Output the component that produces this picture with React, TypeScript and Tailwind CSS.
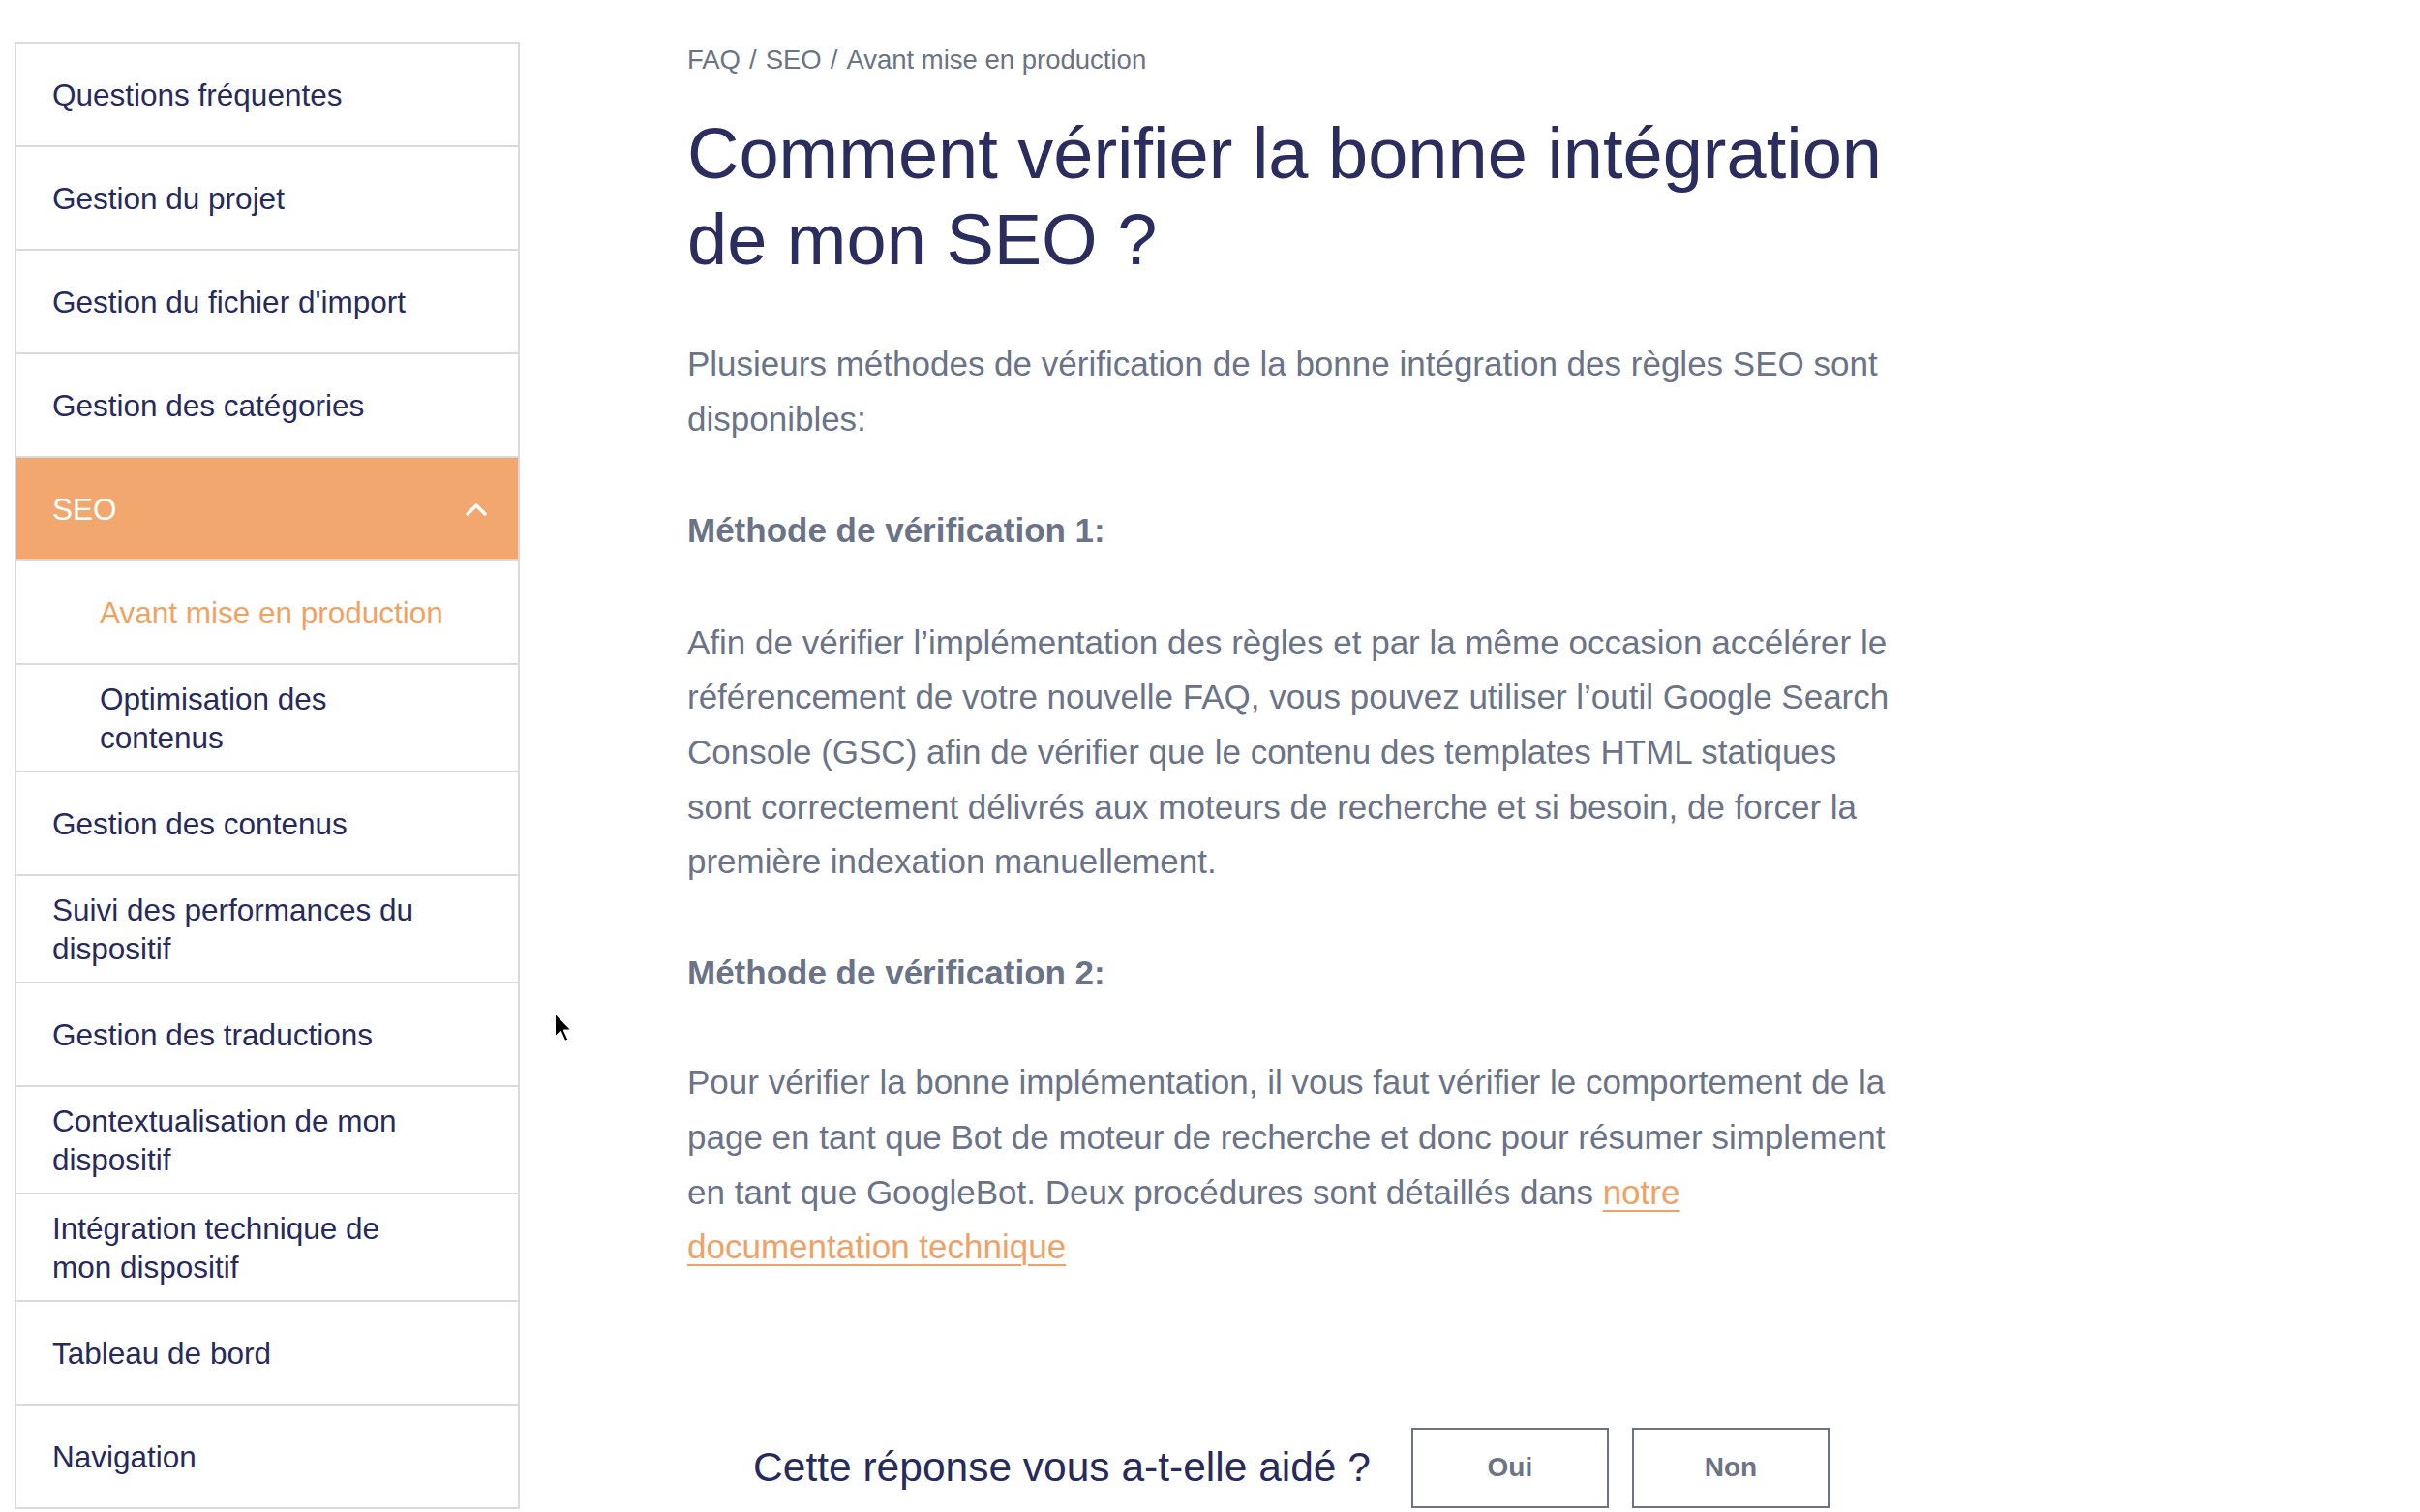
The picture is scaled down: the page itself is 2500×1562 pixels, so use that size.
import React from "react";

const navy = "text-[#272a5c]";

function Row({ children, sub, active }: { children: React.ReactNode; sub?: boolean; active?: boolean }) {
  return (
    <div
      className={`flex items-center min-h-[107px] py-[14.5px] border-b-2 border-[#dadada] text-[31.5px] leading-[40px] ${
        sub ? "pl-[86px] pr-[68px]" : "pl-[37px] pr-[96px]"
      } ${active ? "text-[#f0a263]" : navy}`}
    >
      <span>{children}</span>
    </div>
  );
}

export default function App() {
  return (
    <div
      className="relative w-[2500px] h-[1562px] overflow-hidden bg-white flex"
      style={{ fontFamily: '"Liberation Sans", Arial, Helvetica, sans-serif' }}
    >
      {/* Sidebar */}
      <aside className="ml-[15px] mt-[43px] w-[522px] shrink-0 self-start border-x-2 border-t-2 border-[#dadada]">
        <Row>Questions fréquentes</Row>
        <Row>Gestion du projet</Row>
        <Row>Gestion du fichier d'import</Row>
        <Row>Gestion des catégories</Row>
        <div className="flex items-center justify-between min-h-[107px] py-[14.5px] border-b-2 border-[#dadada] bg-[#f1a76d] pl-[37px] pr-[31px] text-[31.5px] leading-[40px] text-white">
          <span>SEO</span>
          <svg width="24" height="16" viewBox="0 0 24 16" fill="none">
            <path d="M3 13 L12 4 L21 13" stroke="white" strokeWidth="3.5" strokeLinecap="round" strokeLinejoin="round" />
          </svg>
        </div>
        <Row sub active>
          Avant mise en production
        </Row>
        <Row sub>Optimisation des contenus</Row>
        <Row>Gestion des contenus</Row>
        <Row>Suivi des performances du dispositif</Row>
        <Row>Gestion des traductions</Row>
        <Row>Contextualisation de mon dispositif</Row>
        <Row>Intégration technique de mon dispositif</Row>
        <Row>Tableau de bord</Row>
        <Row>Navigation</Row>
      </aside>

      {/* Main */}
      <main className="ml-[173px] pt-[45px] w-[1256px] shrink-0">
        <div className="text-[27.5px] leading-[34px] text-[#6b7385]">
          FAQ<span className="mx-[9px]">/</span>SEO<span className="mx-[9px]">/</span>Avant mise en production
        </div>
        <h1 className="mt-[35px] text-[74px] leading-[89px] text-[#2a2d5d] font-normal">
          Comment vérifier la bonne intégration de mon SEO ?
        </h1>
        <div className="text-[35px] leading-[56.6px] text-[#6a7388]">
          <p className="mt-[56px]">
            Plusieurs méthodes de vérification de la bonne intégration des règles SEO sont disponibles:
          </p>
          <p className="mt-[59px] font-bold">Méthode de vérification 1:</p>
          <p className="mt-[59px]">
            Afin de vérifier l’implémentation des règles et par la même occasion accélérer le référencement de votre
            nouvelle FAQ, vous pouvez utiliser l’outil Google Search Console (GSC) afin de vérifier que le contenu des
            templates HTML statiques sont correctement délivrés aux moteurs de recherche et si besoin, de forcer la
            première indexation manuellement.
          </p>
          <p className="mt-[58px] font-bold">Méthode de vérification 2:</p>
          <p className="mt-[57px]">
            Pour vérifier la bonne implémentation, il vous faut vérifier le comportement de la page en tant que Bot de
            moteur de recherche et donc pour résumer simplement en tant que GoogleBot. Deux procédures sont détaillés
            dans{" "}
            <a className="text-[#f0a264] underline decoration-2 underline-offset-[6px]" href="#">
              notre documentation technique
            </a>
          </p>
        </div>

        <div className="mt-[158px] flex items-center justify-center pr-[8px]">
          <span className="text-[42.5px] leading-[50px] text-[#272a5c]">Cette réponse vous a-t-elle aidé ?</span>
          <button className="ml-[42px] w-[204px] h-[83px] border-2 border-[#6b7385] text-[28px] font-bold text-[#6b7385]">
            Oui
          </button>
          <button className="ml-[24px] w-[204px] h-[83px] border-2 border-[#6b7385] text-[28px] font-bold text-[#6b7385]">
            Non
          </button>
        </div>
      </main>

      {/* Mouse cursor */}
      <svg className="absolute left-[570px] top-[1044px]" width="24" height="36" viewBox="0 0 24 36">
        <path
          d="M3 2 L3 28 L9 22 L13.5 32 L17.5 30.3 L13 20.5 L21 20.5 Z"
          fill="black"
          stroke="white"
          strokeWidth="2"
          strokeLinejoin="round"
        />
      </svg>
    </div>
  );
}
